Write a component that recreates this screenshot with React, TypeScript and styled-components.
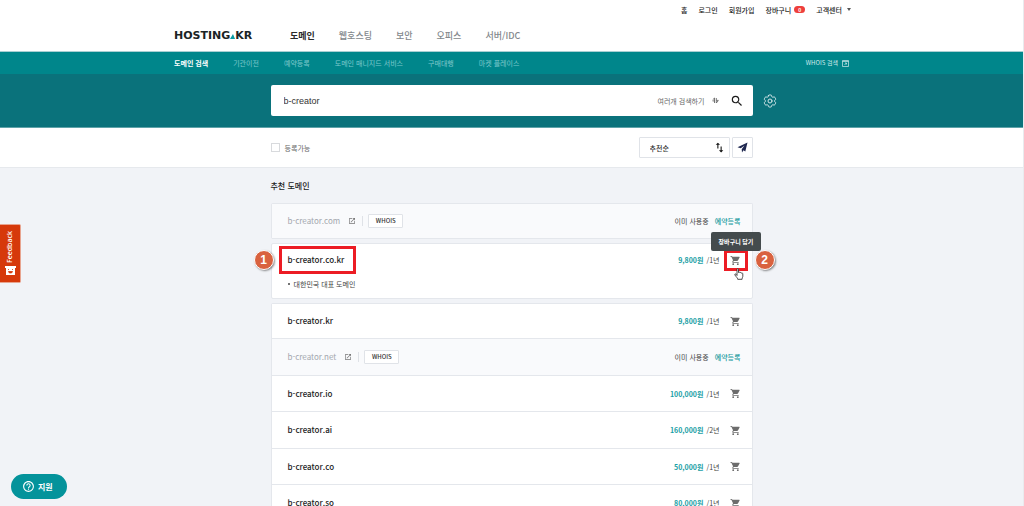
import React from "react";
import styled, { createGlobalStyle, css } from "styled-components";
import {
  MdSearch,
  MdShoppingCart,
  MdOpenInNew,
  MdImportExport,
  MdHelpOutline,
} from "react-icons/md";
import { HiOutlineCog6Tooth } from "react-icons/hi2";

const GlobalStyle = createGlobalStyle`
  *, *::before, *::after { box-sizing: border-box; }
  body { margin: 0; }
  body, button, input, select {
    font-family: "Noto Sans CJK KR", "Noto Sans", sans-serif;
    font-size: 7px;
    line-height: 12px;
    color: #333;
  }
  a { color: inherit; text-decoration: none; }
  button { padding: 0; border: 0; background: none; cursor: pointer; }
  svg { display: block; flex: none; }
  ul { list-style: none; margin: 0; padding: 0; }
`;

const Page = styled.div`
  height: 100vh;
  overflow-y: auto;
  scrollbar-width: none;
  background: #f1f3f7;
  border-right: 1px solid #e9ebee;
`;

const Wide = styled.div`
  width: min(675px, 100% - 32px);
  margin: 0 auto;
  display: flex;
  align-items: center;
`;

const Narrow = styled.div`
  width: min(482px, 100% - 32px);
  margin: 0 auto;
`;

const Header = styled.header`
  background: #fff;
  border-bottom: 1px solid #a9cfd3;
`;

const UtilityBar = styled(Wide)`
  width: min(679px, 100% - 32px);
  height: 19px;
  justify-content: flex-end;
  gap: 11px;
  color: #222;

  a { display: flex; align-items: center; gap: 3px; font-weight: 500; }
`;

const CountBadge = styled.span`
  width: 11px;
  height: 7px;
  border-radius: 4px;
  background: #ee3f3c;
  color: #fff;
  font-size: 5px;
  line-height: 7px;
  font-weight: 700;
  text-align: center;
`;

const Caret = styled.span`
  margin-left: 2px;
  border: 2px solid transparent;
  border-top: 3px solid #555;
  border-bottom: 0;
`;

const MainBar = styled(Wide)`
  height: 32px;
  padding-top: 2px;
`;

const Logo = styled.a`
  width: 116px;
  display: flex;
  align-items: baseline;
  font: 700 11px/12px "DejaVu Sans", sans-serif;
  color: #1b2426;
`;

const MainNav = styled.nav`
  display: flex;
  gap: 24px;
  font-size: 9px;
  line-height: 14px;
`;

const MainLink = styled.a<{ $active?: boolean }>`
  color: ${(p) => (p.$active ? "#2a2a2a" : "#83888c")};
  font-weight: ${(p) => (p.$active ? 700 : 500)};
`;

const SubBar = styled.div`
  background: #00868b;
`;

const SubNav = styled(Wide)`
  height: 22px;
  gap: 25px;
`;

const SubLink = styled.a<{ $active?: boolean }>`
  color: ${(p) => (p.$active ? "#fff" : "#7fc8cb")};
  font-weight: ${(p) => (p.$active ? 700 : 400)};
`;

const WhoisLink = styled.a`
  margin-left: auto;
  display: flex;
  align-items: center;
  gap: 4px;
  font-size: 6px;
  color: #d2ebec;
`;

const SearchBand = styled.section`
  display: grid;
  grid-template-columns: 1fr minmax(0, 482px) 1fr;
  align-items: center;
  padding: 11px 0;
  background: #0a727b;
  border-bottom: 1px solid #5fa3a9;
`;

const SearchForm = styled.form`
  grid-column: 2;
  height: 31px;
  display: flex;
  align-items: center;
  padding: 0 9px 0 13px;
  background: #fff;
  border-radius: 2px;
`;

const SearchInput = styled.input`
  flex: 1;
  min-width: 0;
  padding: 0;
  border: 0;
  outline: 0;
  font-family: "Liberation Sans", sans-serif;
  font-size: 9px;
  color: #333;
`;

const MultiSearch = styled.button`
  display: flex;
  align-items: center;
  gap: 7px;
  margin-right: 11px;
  color: #666;
`;

const SettingsButton = styled.button`
  justify-self: start;
  margin-left: 9px;
  color: #d3e7e9;
`;

const FilterBand = styled.section`
  background: #fff;
  border-bottom: 1px solid #e6e9ed;
`;

const FilterRow = styled(Narrow)`
  height: 39px;
  display: flex;
  align-items: center;
  gap: 2px;
`;

const CheckLabel = styled.label`
  margin-right: auto;
  display: flex;
  align-items: center;
  gap: 5px;
  color: #666;

  input {
    appearance: none;
    width: 9px;
    height: 9px;
    margin: 0;
    border: 1px solid #d8dadd;
    background: #fff;
  }
`;

const outlined = css`
  height: 21px;
  border: 1px solid #e0e3e8;
  border-radius: 1px;
  background: #fff;
`;

const SortBox = styled.label`
  ${outlined}
  width: 91px;
  display: flex;
  align-items: center;
  padding: 0 3px 0 10px;
  color: #111;

  select {
    appearance: none;
    flex: 1;
    padding: 0;
    border: 0;
    background: none;
    font-weight: 500;
  }
`;

const SendButton = styled.button`
  ${outlined}
  width: 21px;
  display: grid;
  place-items: center;
  color: #1f2850;
`;

const Results = styled(Narrow)`
  padding-top: 11px;
`;

const Heading = styled.h2`
  margin: 0 0 10px;
  font-size: 8px;
  line-height: 14px;
  font-weight: 500;
  color: #222;
`;

const Row = styled.li<{ $taken?: boolean }>`
  height: 36px;
  display: flex;
  align-items: center;
  padding: 0 11px 0 16px;
  background: ${(p) => (p.$taken ? "#f9fafc" : "#fff")};
  border-bottom: 1px solid #e4e7ec;

  &:first-child { height: 35px; }
  &:nth-child(even) { height: 37px; }
`;

const Card = styled.ul`
  margin-bottom: 4px;
  border: 1px solid #e4e7ec;
  border-bottom: 0;
  border-radius: 2px;
`;

const FeaturedCard = styled.article`
  height: 56px;
  margin-bottom: 4px;
  padding: 7px 11px 8px 16px;
  display: flex;
  flex-direction: column;
  justify-content: space-between;
  background: #fff;
  border: 1px solid #e4e7ec;
  border-radius: 2px;
`;

const FeaturedTop = styled.div`
  display: flex;
  align-items: center;
  height: 18px;
`;

const Note = styled.p`
  margin: 0;
  display: flex;
  align-items: center;
  gap: 4px;
  color: #444;

  &::before {
    content: "";
    width: 2px;
    height: 2px;
    border-radius: 1px;
    background: #444;
  }
`;

const Name = styled.span<{ $taken?: boolean }>`
  position: relative;
  font-size: 8px;
  line-height: 14px;
  font-weight: ${(p) => (p.$taken ? 400 : 500)};
  color: ${(p) => (p.$taken ? "#a3a7ae" : "#222")};
`;

const OpenLink = styled.a`
  margin-left: 8px;
  padding-right: 6px;
  border-right: 1px solid #dfe2e7;
  color: #777;
  height: 10px;
  display: flex;
  align-items: center;
`;

const WhoisButton = styled.button`
  height: 14px;
  width: 35px;
  margin-left: 5px;
  background: #fff;
  border: 1px solid #e0e3e8;
  border-radius: 1px;
  color: #333;
  font-size: 6px;
  font-weight: 500;
`;

const Status = styled.span`
  margin-left: auto;
  color: #444;
`;

const Reserve = styled.a`
  margin-left: 6px;
  color: #1a9aa0;
  font-weight: 500;
`;

const Price = styled.strong`
  margin-left: auto;
  font-weight: 700;
  color: #1aa0a5;
`;

const Period = styled.span`
  margin: 0 10px 0 3px;
  color: #444;
`;

const CartButton = styled.button`
  position: relative;
  color: #6c6c6c;
`;

const Highlight = styled.span<{ $pad: string }>`
  position: absolute;
  inset: ${(p) => p.$pad};
  border: 3px solid #ec1c24;
`;

const Step = styled.span<{ $side: "left" | "right" }>`
  position: absolute;
  top: 50%;
  ${(p) => p.$side}: -34px;
  width: 20px;
  height: 20px;
  margin-top: -10px;
  border: 1px solid #fff;
  border-radius: 50%;
  background: #d9623f;
  box-shadow: 1px 1px 2px rgba(0, 0, 0, 0.45);
  color: #fff;
  font: 700 12px/18px "Liberation Sans", sans-serif;
  text-align: center;
`;

const Tooltip = styled.span`
  position: absolute;
  left: 50%;
  bottom: 100%;
  width: 50px;
  margin: 0 0 4px -24px;
  border-radius: 2px;
  background: #444b4d;
  color: #fff;
  font-size: 6px;
  line-height: 19px;
  font-weight: 700;
  text-align: center;
`;

const Pointer = styled.svg`
  position: absolute;
  left: 4px;
  top: 13px;
`;

const Feedback = styled.button`
  position: fixed;
  left: 0;
  top: 224px;
  width: 21px;
  height: 59px;
  display: flex;
  flex-direction: column;
  align-items: center;
  justify-content: space-between;
  padding: 6px 0 7px;
  border: 1px solid #e8a48f;
  border-left: 0;
  border-radius: 0 2px 2px 0;
  background: #d6390b;
  color: #fff;

  span {
    writing-mode: vertical-rl;
    transform: rotate(180deg);
    font: 600 7px/10px "Open Sans", sans-serif;
  }
`;

const Support = styled.button`
  position: fixed;
  left: 11px;
  bottom: 7px;
  width: 56px;
  height: 25px;
  display: flex;
  align-items: center;
  padding-left: 11px;
  gap: 3px;
  border-radius: 13px;
  background: #04939b;
  color: #fff;
  font-size: 8px;
  font-weight: 700;
`;

type Domain = { name: string; price?: string; period?: string };

const domains: Domain[] = [
  { name: "b-creator.kr", price: "9,800원", period: "/1년" },
  { name: "b-creator.net" },
  { name: "b-creator.io", price: "100,000원", period: "/1년" },
  { name: "b-creator.ai", price: "160,000원", period: "/2년" },
  { name: "b-creator.co", price: "50,000원", period: "/1년" },
  { name: "b-creator.so", price: "80,000원", period: "/1년" },
];

function DomainRow({ name, price, period }: Domain) {
  if (!price) {
    return (
      <Row $taken>
        <Name $taken>{name}</Name>
        <OpenLink href="#" aria-label={name}>
          <MdOpenInNew size={8} />
        </OpenLink>
        <WhoisButton type="button">WHOIS</WhoisButton>
        <Status>이미 사용중</Status>
        <Reserve href="#">예약등록</Reserve>
      </Row>
    );
  }
  return (
    <Row>
      <Name>{name}</Name>
      <Price>{price}</Price>
      <Period>{period}</Period>
      <CartButton type="button" aria-label="장바구니 담기">
        <MdShoppingCart size={11} />
      </CartButton>
    </Row>
  );
}

export default function App() {
  return (
    <>
      <GlobalStyle />
      <Page lang="ko">
        <Header>
          <UtilityBar>
            <a href="#">홈</a>
            <a href="#">로그인</a>
            <a href="#">회원가입</a>
            <a href="#">
              장바구니 <CountBadge>0</CountBadge>
            </a>
            <a href="#">
              고객센터 <Caret />
            </a>
          </UtilityBar>
          <MainBar>
            <Logo href="#">
              HOSTING
              <svg width="5" height="5" viewBox="0 0 5 5" aria-hidden="true">
                <path d="M0 5 3 0l2 5z" fill="#0a9aa2" />
              </svg>
              KR
            </Logo>
            <MainNav>
              <MainLink href="#" $active>도메인</MainLink>
              <MainLink href="#">웹호스팅</MainLink>
              <MainLink href="#">보안</MainLink>
              <MainLink href="#">오피스</MainLink>
              <MainLink href="#">서버/IDC</MainLink>
            </MainNav>
          </MainBar>
        </Header>

        <SubBar>
          <SubNav as="nav">
            <SubLink href="#" $active>도메인 검색</SubLink>
            <SubLink href="#">기관이전</SubLink>
            <SubLink href="#">예약등록</SubLink>
            <SubLink href="#">도메인 매니지드 서비스</SubLink>
            <SubLink href="#">구매대행</SubLink>
            <SubLink href="#">마켓 플레이스</SubLink>
            <WhoisLink href="#">
              WHOIS 검색
              <svg width="7" height="7" viewBox="0 0 7 7" fill="none" stroke="currentColor" aria-hidden="true">
                <path d="M.5.5h6v6h-6zM.5 1.5h6M2.5 5 4.5 3M3 3h1.5v1.5" strokeWidth=".7" />
              </svg>
            </WhoisLink>
          </SubNav>
        </SubBar>

        <SearchBand>
          <SearchForm onSubmit={(e) => e.preventDefault()}>
            <SearchInput aria-label="도메인 검색" defaultValue="b-creator" />
            <MultiSearch type="button">
              여러개 검색하기
              <svg width="7" height="7" viewBox="0 0 7 7" fill="none" stroke="#555" strokeWidth=".8" aria-hidden="true">
                <path d="M2.5 6V1L.7 2.8M4.3 1v5l1.9-2.2M.5 3.9h2M4.5 3.4h2" />
              </svg>
            </MultiSearch>
            <button type="submit" aria-label="검색">
              <MdSearch size={14} color="#1c1c1c" />
            </button>
          </SearchForm>
          <SettingsButton type="button" aria-label="설정">
            <HiOutlineCog6Tooth size={16} />
          </SettingsButton>
        </SearchBand>

        <FilterBand>
          <FilterRow>
            <CheckLabel>
              <input type="checkbox" />
              등록가능
            </CheckLabel>
            <SortBox>
              <select aria-label="정렬" defaultValue="추천순">
                <option>추천순</option>
              </select>
              <MdImportExport size={13} />
            </SortBox>
            <SendButton type="button" aria-label="보내기">
              <svg width="11" height="11" viewBox="0 0 11 11" aria-hidden="true">
                <path d="M10.5.5.5 5.2l3.3 1.1L7.5 3.5 4.7 7.2l.3 3.3 1.5-2.3 1.8 1.3z" fill="currentColor" />
              </svg>
            </SendButton>
          </FilterRow>
        </FilterBand>

        <Results as="main">
          <Heading>추천 도메인</Heading>
          <Card>
            <DomainRow name="b-creator.com" />
          </Card>
          <FeaturedCard>
            <FeaturedTop>
              <Name>
                b-creator.co.kr
                <Highlight $pad="-7px -12px -7px -9px" />
                <Step $side="left">1</Step>
              </Name>
              <Price>9,800원</Price>
              <Period>/1년</Period>
              <CartButton type="button" aria-label="장바구니 담기">
                <MdShoppingCart size={11} />
                <Highlight $pad="-5px -7px -5px -6px" />
                <Step $side="right">2</Step>
                <Tooltip>장바구니 담기</Tooltip>
                <Pointer width="10" height="12" viewBox="0 0 10 12" aria-hidden="true">
                  <path
                    d="M3 7.5V1.4c0-1.1 1.5-1.1 1.5 0v3.2c.2-.7 1.4-.6 1.5.2.3-.5 1.3-.4 1.4.4.4-.4 1.4-.2 1.4.6v2.4c0 1-.7 1.5-.7 3.1H3.7c0-1.4-1.6-2.4-2.8-4.3-.5-1 .7-1.4 1.3-.6z"
                    fill="#fff"
                    stroke="#222"
                    strokeWidth=".8"
                  />
                </Pointer>
              </CartButton>
            </FeaturedTop>
            <Note>대한민국 대표 도메인</Note>
          </FeaturedCard>
          <Card>
            {domains.map((d) => (
              <DomainRow key={d.name} {...d} />
            ))}
          </Card>
        </Results>
      </Page>

      <Feedback type="button">
        <span>Feedback</span>
        <svg width="11" height="9" viewBox="0 0 11 9" aria-hidden="true">
          <path d="M0 0h11v2h-1v7H1V2H0z" fill="#fff" />
          <path d="M3.5 3v1M7.5 3v1M3.5 5.5h4c0 2-4 2-4 0z" fill="#d6390b" stroke="#d6390b" strokeWidth=".8" />
        </svg>
      </Feedback>
      <Support type="button">
        <MdHelpOutline size={13} />
        지원
      </Support>
    </>
  );
}
